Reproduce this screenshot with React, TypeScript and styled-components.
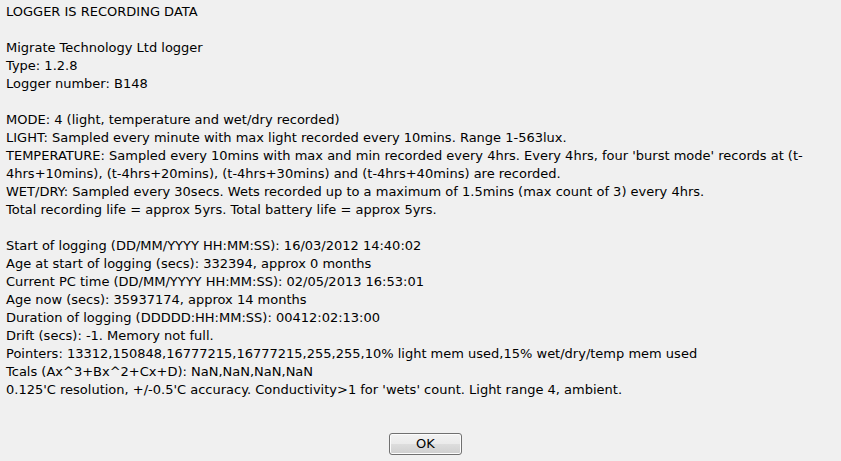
import React from "react";
import styled, { createGlobalStyle } from "styled-components";

const Global = createGlobalStyle`
  html, body { margin: 0; padding: 0; background: #f0f0f0; }
  #root { width: 841px; height: 461px; }
`;

const Dialog = styled.div`
  box-sizing: border-box;
  width: 841px;
  height: 461px;
  background: #f0f0f0;
  display: flex;
  flex-direction: column;
  font-family: "DejaVu Sans", "Liberation Sans", sans-serif;
  font-size: 13px;
  color: #000;
`;

const Body = styled.div`
  flex: 1;
  padding: 3px 6px 0 6px;
`;

const Line = styled.div`
  height: 18px;
  line-height: 18px;
  white-space: nowrap;
`;

const Footer = styled.div`
  display: flex;
  justify-content: flex-start;
  padding: 0 0 6px 389px;
`;

const Button = styled.button`
  box-sizing: border-box;
  width: 73px;
  height: 22px;
  border: 1px solid #707070;
  border-radius: 3px;
  background: linear-gradient(#f2f2f2 0%, #ebebeb 48%, #dddddd 52%, #cfcfcf 100%);
  box-shadow: inset 0 0 0 1px #fcfcfc;
  font-family: "DejaVu Sans", "Liberation Sans", sans-serif;
  font-size: 13px;
  color: #000;
  padding: 0;
  line-height: 20px;
`;

const lines: string[] = [
  "LOGGER IS RECORDING DATA",
  "",
  "Migrate Technology Ltd logger",
  "Type: 1.2.8",
  "Logger number: B148",
  "",
  "MODE: 4 (light, temperature and wet/dry recorded)",
  "LIGHT: Sampled every minute with max light recorded every 10mins. Range 1-563lux.",
  "TEMPERATURE: Sampled every 10mins with max and min recorded every 4hrs. Every 4hrs, four 'burst mode' records at (t-",
  "4hrs+10mins), (t-4hrs+20mins), (t-4hrs+30mins) and (t-4hrs+40mins) are recorded.",
  "WET/DRY: Sampled every 30secs. Wets recorded up to a maximum of 1.5mins (max count of 3) every 4hrs.",
  "Total recording life = approx 5yrs. Total battery life = approx 5yrs.",
  "",
  "Start of logging (DD/MM/YYYY HH:MM:SS): 16/03/2012 14:40:02",
  "Age at start of logging (secs): 332394, approx 0 months",
  "Current PC time (DD/MM/YYYY HH:MM:SS): 02/05/2013 16:53:01",
  "Age now (secs): 35937174, approx 14 months",
  "Duration of logging (DDDDD:HH:MM:SS): 00412:02:13:00",
  "Drift (secs): -1. Memory not full.",
  "Pointers: 13312,150848,16777215,16777215,255,255,10% light mem used,15% wet/dry/temp mem used",
  "Tcals (Ax^3+Bx^2+Cx+D): NaN,NaN,NaN,NaN",
  "0.125'C resolution, +/-0.5'C accuracy. Conductivity>1 for 'wets' count. Light range 4, ambient.",
];

export default function App() {
  return (
    <>
      <Global />
      <Dialog>
        <Body>
          {lines.map((l, i) => (
            <Line key={i}>{l || "\u00a0"}</Line>
          ))}
        </Body>
        <Footer>
          <Button>OK</Button>
        </Footer>
      </Dialog>
    </>
  );
}
